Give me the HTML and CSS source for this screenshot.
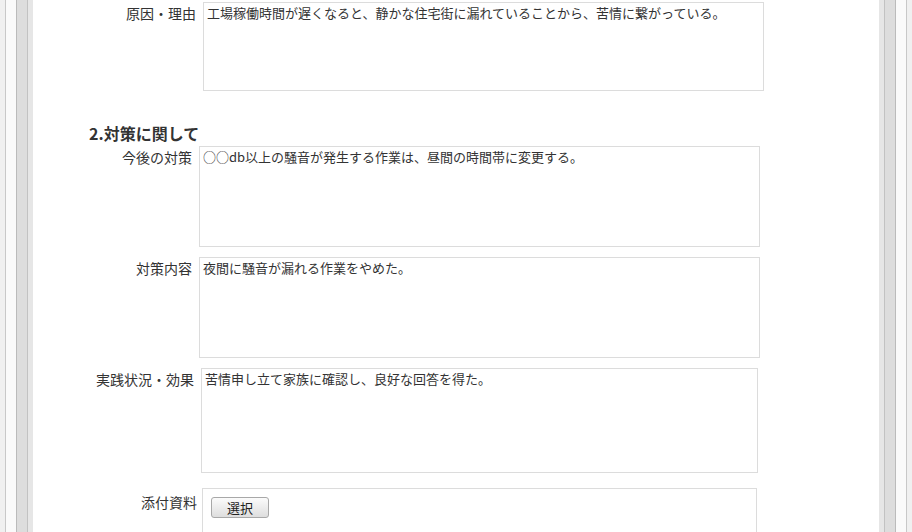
FILE: index.html
```html
<!DOCTYPE html>
<html lang="ja">
<head>
    <meta charset="UTF-8">
    <meta name="viewport" content="width=device-width, initial-scale=1.0">
    <title>苦情対応報告</title>
    <link rel="stylesheet" href="styles.css">
</head>
<body>

    <div class="page">
        <div class="frame">
            <div class="panel">
                <div class="inner">
                    <div class="content">

                        <div class="row row-reason">
                            <label class="label">原因・理由</label>
                            <textarea class="field field-short">工場稼働時間が遅くなると、静かな住宅街に漏れていることから、苦情に繋がっている。</textarea>
                        </div>

                        <h2 class="section-title">2.対策に関して</h2>

                        <div class="row row-plan">
                            <label class="label">今後の対策</label>
                            <textarea class="field">○○db以上の騒音が発生する作業は、昼間の時間帯に変更する。</textarea>
                        </div>

                        <div class="row row-plan">
                            <label class="label">対策内容</label>
                            <textarea class="field">夜間に騒音が漏れる作業をやめた。</textarea>
                        </div>

                        <div class="row row-effect">
                            <label class="label">実践状況・効果</label>
                            <textarea class="field field-tall">苦情申し立て家族に確認し、良好な回答を得た。</textarea>
                        </div>

                        <div class="row row-attach">
                            <label class="label">添付資料</label>
                            <div class="attach-box">
                                <button class="select-btn">選択</button>
                            </div>
                        </div>

                    </div>
                </div>
            </div>
        </div>
    </div>

</body>
</html>
```

FILE: styles.css
```css
html, body {
    margin: 0;
    height: 532px;
    overflow: hidden;
}
body {
    background-color: #f0f0f0;
    color: #333;
    font-family: "Noto Sans CJK JP", "Noto Sans", sans-serif;
}
.page {
    padding: 0 5px;
    height: 532px;
}
.frame {
    background-color: #fafafa;
    border-left: 1px solid #c8c8c8;
    border-right: 1px solid #c8c8c8;
    padding: 0 10px;
    height: 100%;
}
.panel {
    background-color: #dddddd;
    border-left: 1px solid #bbbbbb;
    border-right: 1px solid #bbbbbb;
    padding: 0 10px;
    height: 100%;
}
.inner {
    background-color: #e6e6e6;
    border-left: 1px solid #c2c2c2;
    border-right: 1px solid #c2c2c2;
    padding: 0 5px;
    height: 100%;
}
.content {
    background-color: #fff;
    height: 100%;
    padding-top: 2px;
    box-sizing: border-box;
}
.row {
    display: flex;
    align-items: flex-start;
    gap: 7px;
    margin-top: 10px;
}
.row-reason {
    margin-top: 0;
}
.label {
    font-size: 14px;
    line-height: 20px;
    text-align: right;
    padding-top: 1px;
    flex-shrink: 0;
}
.row-reason .label {
    width: 163px;
}
.row-plan .label {
    width: 159px;
}
.row-effect .label {
    width: 161px;
}
.row-attach {
    margin-top: 15px;
    gap: 5px;
}
.row-attach .label {
    width: 164px;
    padding-top: 4px;
}
.field {
    box-sizing: border-box;
    width: 561px;
    height: 101px;
    border: 1px solid #dcdcdc;
    padding: 1px 3px;
    margin: 0;
    font-family: "Noto Sans CJK JP", "Noto Sans", sans-serif;
    font-size: 13px;
    line-height: 18px;
    color: #333;
    resize: none;
    outline: none;
    overflow: hidden;
}
.field-short {
    height: 89px;
}
.field-tall {
    width: 557px;
    height: 105px;
}
.section-title {
    margin: 30px 0 0 56px;
    font-size: 16px;
    line-height: 24px;
    font-weight: bold;
    color: #333;
}
.section-title + .row {
    margin-top: 1px;
}
.attach-box {
    box-sizing: border-box;
    width: 555px;
    height: 70px;
    border: 1px solid #dcdcdc;
    padding: 8px;
}
.select-btn {
    display: block;
    width: 58px;
    height: 21px;
    padding: 0;
    border: 1px solid #a8a8a8;
    border-radius: 3px;
    background: linear-gradient(#fbfbfb, #dedede);
    font-family: "Noto Sans CJK JP", "Noto Sans", sans-serif;
    font-size: 13px;
    line-height: 19px;
    color: #222;
}
```
